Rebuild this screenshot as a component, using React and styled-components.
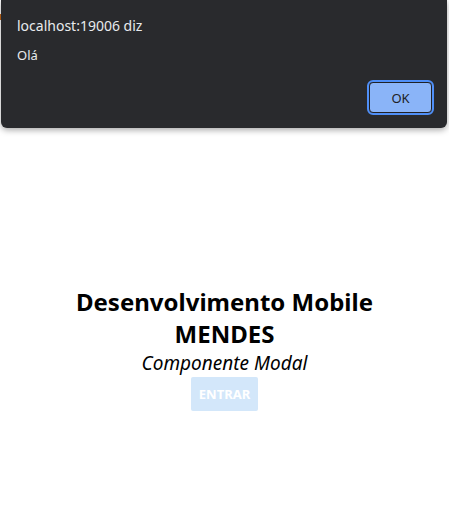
import React from 'react';
import styled, { createGlobalStyle } from 'styled-components';

const GlobalStyle = createGlobalStyle`
    html, body {
        margin: 0;
        padding: 0;
        background: #ffffff;
        font-family: "Noto Sans", "Open Sans", sans-serif;
    }
`;

const Page = styled.div`
    position: relative;
    width: 100%;
    height: 525px;
    overflow: hidden;
    background: #ffffff;
`;

const Main = styled.main`
    display: flex;
    flex-direction: column;
    align-items: center;
    padding-top: 286px;
    text-align: center;
    color: #000000;
`;

const Title = styled.h1`
    margin: 0;
    font-size: 24px;
    font-weight: 700;
    line-height: 32px;
`;

const Subtitle = styled.p`
    margin: 0;
    font-size: 19px;
    font-style: italic;
    line-height: 26px;
`;

const EnterButton = styled.button`
    margin-top: 1px;
    width: 67px;
    height: 34px;
    border: none;
    border-radius: 2px;
    background: #d3e7fa;
    color: #ffffff;
    font-family: inherit;
    font-size: 13px;
    font-weight: 700;
    cursor: not-allowed;
`;

const Dialog = styled.div`
    position: absolute;
    top: 0;
    left: 1px;
    right: 2px;
    height: 128px;
    background: #292a2d;
    border-radius: 0 0 6px 6px;
    box-shadow: 0 2px 6px rgba(0, 0, 0, 0.35);
    font-family: "Noto Sans", "Open Sans", sans-serif;
    color: #e8eaed;
    box-sizing: border-box;
    padding: 16px 15px 0 16px;
    display: flex;
    flex-direction: column;
`;

const Origin = styled.div`
    font-size: 14px;
    line-height: 20px;
`;

const Message = styled.div`
    margin-top: 10px;
    font-size: 13px;
    line-height: 18px;
`;

const Actions = styled.div`
    display: flex;
    justify-content: flex-end;
    margin-top: 18px;
`;

const OkButton = styled.button`
    width: 63px;
    height: 31px;
    box-sizing: border-box;
    border: 1px solid #202124;
    outline: 2px solid #4f8ff7;
    outline-offset: 0;
    border-radius: 4px;
    background: #8ab4f8;
    color: #202124;
    font-family: inherit;
    font-size: 13px;
    cursor: pointer;
`;

const Edge = styled.span`
    position: absolute;
    left: 0;
    top: 14px;
    width: 1px;
    height: 6px;
    background: #c76a1a;
`;

export default function App() {
    return (
        <>
        <GlobalStyle />
        <Page>
            <Main>
                <Title>Desenvolvimento Mobile<br />MENDES</Title>
                <Subtitle>Componente Modal</Subtitle>
                <EnterButton disabled>ENTRAR</EnterButton>
            </Main>
            <Edge />
            <Dialog>
                <Origin>localhost:19006 diz</Origin>
                <Message>Olá</Message>
                <Actions>
                    <OkButton>OK</OkButton>
                </Actions>
            </Dialog>
        </Page>
        </>
    );
}
